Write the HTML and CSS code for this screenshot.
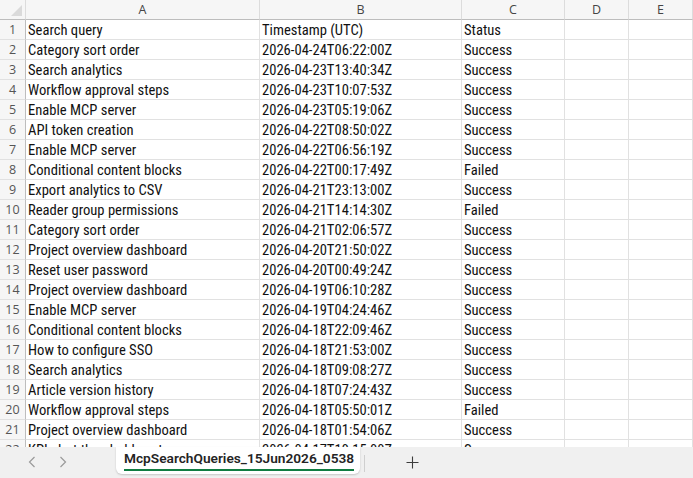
FILE: index.html
```html
<!DOCTYPE html>
<html lang="en">
<head>
<meta charset="utf-8">
<title>McpSearchQueries_15Jun2026_0538</title>
<link rel="stylesheet" href="styles.css">
</head>
<body>
<div class="workbook">
  <div class="grid">
    <div class="row head">
      <div class="corner"><svg width="26" height="19" viewBox="0 0 26 19"><polygon points="22,5 22,16 11,16" fill="#dadada"/></svg></div>
      <div class="col">A</div><div class="col">B</div><div class="col">C</div><div class="col">D</div><div class="col">E</div>
    </div>
    <div class="row"><div class="num">1</div><div class="cell">Search query</div><div class="cell">Timestamp (UTC)</div><div class="cell">Status</div><div class="cell"></div><div class="cell"></div></div>
    <div class="row"><div class="num">2</div><div class="cell">Category sort order</div><div class="cell">2026-04-24T06:22:00Z</div><div class="cell">Success</div><div class="cell"></div><div class="cell"></div></div>
    <div class="row"><div class="num">3</div><div class="cell">Search analytics</div><div class="cell">2026-04-23T13:40:34Z</div><div class="cell">Success</div><div class="cell"></div><div class="cell"></div></div>
    <div class="row"><div class="num">4</div><div class="cell">Workflow approval steps</div><div class="cell">2026-04-23T10:07:53Z</div><div class="cell">Success</div><div class="cell"></div><div class="cell"></div></div>
    <div class="row"><div class="num">5</div><div class="cell">Enable MCP server</div><div class="cell">2026-04-23T05:19:06Z</div><div class="cell">Success</div><div class="cell"></div><div class="cell"></div></div>
    <div class="row"><div class="num">6</div><div class="cell">API token creation</div><div class="cell">2026-04-22T08:50:02Z</div><div class="cell">Success</div><div class="cell"></div><div class="cell"></div></div>
    <div class="row"><div class="num">7</div><div class="cell">Enable MCP server</div><div class="cell">2026-04-22T06:56:19Z</div><div class="cell">Success</div><div class="cell"></div><div class="cell"></div></div>
    <div class="row"><div class="num">8</div><div class="cell">Conditional content blocks</div><div class="cell">2026-04-22T00:17:49Z</div><div class="cell">Failed</div><div class="cell"></div><div class="cell"></div></div>
    <div class="row"><div class="num">9</div><div class="cell">Export analytics to CSV</div><div class="cell">2026-04-21T23:13:00Z</div><div class="cell">Success</div><div class="cell"></div><div class="cell"></div></div>
    <div class="row"><div class="num">10</div><div class="cell">Reader group permissions</div><div class="cell">2026-04-21T14:14:30Z</div><div class="cell">Failed</div><div class="cell"></div><div class="cell"></div></div>
    <div class="row"><div class="num">11</div><div class="cell">Category sort order</div><div class="cell">2026-04-21T02:06:57Z</div><div class="cell">Success</div><div class="cell"></div><div class="cell"></div></div>
    <div class="row"><div class="num">12</div><div class="cell">Project overview dashboard</div><div class="cell">2026-04-20T21:50:02Z</div><div class="cell">Success</div><div class="cell"></div><div class="cell"></div></div>
    <div class="row"><div class="num">13</div><div class="cell">Reset user password</div><div class="cell">2026-04-20T00:49:24Z</div><div class="cell">Success</div><div class="cell"></div><div class="cell"></div></div>
    <div class="row"><div class="num">14</div><div class="cell">Project overview dashboard</div><div class="cell">2026-04-19T06:10:28Z</div><div class="cell">Success</div><div class="cell"></div><div class="cell"></div></div>
    <div class="row"><div class="num">15</div><div class="cell">Enable MCP server</div><div class="cell">2026-04-19T04:24:46Z</div><div class="cell">Success</div><div class="cell"></div><div class="cell"></div></div>
    <div class="row"><div class="num">16</div><div class="cell">Conditional content blocks</div><div class="cell">2026-04-18T22:09:46Z</div><div class="cell">Success</div><div class="cell"></div><div class="cell"></div></div>
    <div class="row"><div class="num">17</div><div class="cell">How to configure SSO</div><div class="cell">2026-04-18T21:53:00Z</div><div class="cell">Success</div><div class="cell"></div><div class="cell"></div></div>
    <div class="row"><div class="num">18</div><div class="cell">Search analytics</div><div class="cell">2026-04-18T09:08:27Z</div><div class="cell">Success</div><div class="cell"></div><div class="cell"></div></div>
    <div class="row"><div class="num">19</div><div class="cell">Article version history</div><div class="cell">2026-04-18T07:24:43Z</div><div class="cell">Success</div><div class="cell"></div><div class="cell"></div></div>
    <div class="row"><div class="num">20</div><div class="cell">Workflow approval steps</div><div class="cell">2026-04-18T05:50:01Z</div><div class="cell">Failed</div><div class="cell"></div><div class="cell"></div></div>
    <div class="row"><div class="num">21</div><div class="cell">Project overview dashboard</div><div class="cell">2026-04-18T01:54:06Z</div><div class="cell">Success</div><div class="cell"></div><div class="cell"></div></div>
    <div class="row"><div class="num">22</div><div class="cell">KPI alert thresholds setup</div><div class="cell">2026-04-17T19:15:00Z</div><div class="cell">Success</div><div class="cell"></div><div class="cell"></div></div>
  </div>
  <div class="tabbar">
    <div class="nav">
      <svg class="arrow" width="8" height="12" viewBox="0 0 8 12"><polyline points="6.5,1 1.5,6 6.5,11" fill="none" stroke="#9a9a9a" stroke-width="1.2"/></svg>
      <svg class="arrow" width="8" height="12" viewBox="0 0 8 12"><polyline points="1.5,1 6.5,6 1.5,11" fill="none" stroke="#9a9a9a" stroke-width="1.2"/></svg>
    </div>
    <div class="tab"><span class="tab-name">McpSearchQueries_15Jun2026_0538</span></div>
    <div class="sep"></div>
    <div class="add"><svg width="13" height="13" viewBox="0 0 13 13"><path d="M6.5 0.5v12M0.5 6.5h12" stroke="#3c3c3c" stroke-width="1.1"/></svg></div>
  </div>
</div>
</body>
</html>
```
FILE: styles.css
```css
html, body {
  margin: 0;
  background: #ffffff;
}

.workbook {
  width: 693px;
  height: 478px;
  display: flex;
  flex-direction: column;
  overflow: hidden;
}

.grid {
  height: 447px;
  overflow: hidden;
  flex: none;
}

.row {
  display: grid;
  grid-template-columns: 26px 234px 202px 103px 64px 64px;
  height: 20px;
}

.row > div {
  box-sizing: border-box;
  border-right: 1px solid #e1e1e1;
  border-bottom: 1px solid #e1e1e1;
  height: 20px;
  overflow: hidden;
  white-space: nowrap;
}

.head {
  height: 20px;
}

.head > div {
  background: #f6f6f6;
  border-bottom-color: #bdbdbd;
  border-right-color: #dcdcdc;
}

.corner {
  padding: 0;
}

.corner svg {
  display: block;
}

.col {
  font-family: "Open Sans", "Noto Sans", sans-serif;
  font-size: 12.5px;
  line-height: 19px;
  color: #454545;
  text-align: center;
}

.row > .num {
  background: #f6f6f6;
  border-right-color: #bdbdbd;
  font-family: "Open Sans", "Noto Sans", sans-serif;
  font-size: 12.5px;
  line-height: 19px;
  color: #555555;
  text-align: center;
}

.cell {
  font-family: Roboto, "Liberation Sans", sans-serif;
  font-stretch: 75%;
  font-size: 14.6px;
  line-height: 20px;
  padding-left: 2px;
  color: #111111;
}

.tabbar {
  flex: 1;
  background: #f0f0f0;
  display: flex;
  align-items: flex-start;
}

.nav {
  width: 116px;
  height: 30px;
  display: flex;
  align-items: center;
  gap: 23px;
  padding-left: 28px;
  box-sizing: border-box;
}

.arrow {
  display: block;
}

.tab {
  width: 244px;
  height: 27px;
  box-sizing: border-box;
  background: #ffffff;
  border-radius: 0 0 6px 6px;
  box-shadow: 0 1px 2px rgba(0, 0, 0, 0.18);
  padding-left: 8px;
  overflow: hidden;
  white-space: nowrap;
}

.tab-name {
  display: inline-block;
  font-family: Roboto, "Noto Sans", sans-serif;
  font-weight: 600;
  font-size: 13.7px;
  line-height: 21px;
  padding-top: 1px;
  color: #242424;
  border-bottom: 2px solid #107c41;
}

.sep {
  width: 1px;
  height: 17px;
  margin: 8px 0 0 4px;
  background: #cfcfcf;
}

.add {
  margin: 9px 0 0 41px;
  height: 13px;
}

.add svg {
  display: block;
}
```
